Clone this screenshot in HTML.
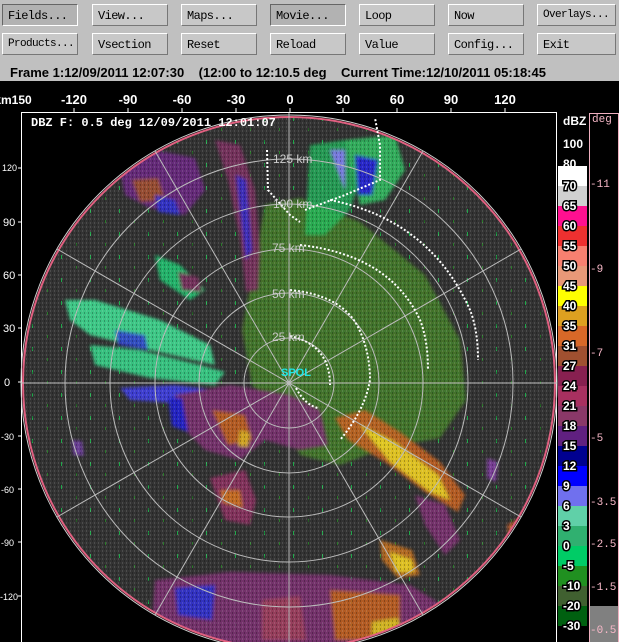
<!DOCTYPE html>
<html><head><meta charset="utf-8">
<style>
body{margin:0;width:619px;height:642px;overflow:hidden;background:#000;font-family:"Liberation Sans",sans-serif}
.top{position:absolute;left:0;top:0;width:619px;height:81px;background:#c0c0c0}
.b{position:absolute;height:22px;width:76px;background:#c8c8c8;border:1px solid;border-color:#fff #777 #777 #fff;box-sizing:border-box;font:12px "Liberation Mono",monospace;color:#000;padding:4px 0 0 5px;letter-spacing:-0.6px;white-space:nowrap;overflow:hidden}
.b.p{background:#b2b2b2;border-color:#666 #fff #fff #666}
.st{position:absolute;top:65px;left:10px;font:bold 13px "Liberation Sans",sans-serif;color:#000;white-space:pre}
</style></head><body>
<div class="top"></div>
<div class="b p" style="left:2px;top:4px">Fields...</div>
<div class="b" style="left:92px;top:4px">View...</div>
<div class="b" style="left:181px;top:4px">Maps...</div>
<div class="b p" style="left:270px;top:4px">Movie...</div>
<div class="b" style="left:359px;top:4px">Loop</div>
<div class="b" style="left:448px;top:4px">Now</div>
<div class="b" style="left:537px;top:4px;width:79px;font-size:11px">Overlays...</div>
<div class="b" style="left:2px;top:33px;font-size:11px">Products...</div>
<div class="b" style="left:92px;top:33px">Vsection</div>
<div class="b" style="left:181px;top:33px">Reset</div>
<div class="b" style="left:270px;top:33px">Reload</div>
<div class="b" style="left:359px;top:33px">Value</div>
<div class="b" style="left:448px;top:33px">Config...</div>
<div class="b" style="left:537px;top:33px;width:79px">Exit</div>
<div class="st">Frame 1:12/09/2011 12:07:30    (12:00 to 12:10.5 deg    Current Time:12/10/2011 05:18:45</div>
<svg style="position:absolute;left:0;top:81px" width="619" height="561" viewBox="0 81 619 561" xmlns="http://www.w3.org/2000/svg">
<defs>
<pattern id="sp" width="29" height="23" patternUnits="userSpaceOnUse">
<rect x="3" y="2" width="1" height="4" fill="#1fa84a"/><rect x="18" y="13" width="1" height="3" fill="#2a7a2a"/>
</pattern>
<pattern id="ol" width="6" height="6" patternUnits="userSpaceOnUse">
<rect width="6" height="6" fill="#43702a"/><rect x="1" y="0" width="1" height="3" fill="#2e9a3a"/><rect x="4" y="3" width="1" height="3" fill="#556626"/>
</pattern>
<pattern id="tx" width="4" height="4" patternUnits="userSpaceOnUse">
<rect width="4" height="4" fill="#000" opacity="0"/><rect x="0" y="0" width="1" height="2" fill="#000" opacity=".25"/><rect x="2" y="2" width="1" height="2" fill="#fff" opacity=".12"/>
</pattern>
<filter id="bl"><feGaussianBlur stdDeviation="1.5"/></filter>
<clipPath id="dc"><circle cx="289" cy="383" r="266"/></clipPath>
</defs>
<g font-family="Liberation Sans,sans-serif" font-weight="bold" font-size="13" fill="#fff" text-anchor="middle">
<text x="13" y="104" font-size="12">km150</text><text x="74" y="104">-120</text><text x="128" y="104">-90</text><text x="182" y="104">-60</text><text x="236" y="104">-30</text><text x="290" y="104">0</text><text x="343" y="104">30</text><text x="397" y="104">60</text><text x="451" y="104">90</text><text x="505" y="104">120</text>
</g>
<g stroke="#fff"><path d="M74 108v5M128 108v5M182 108v5M236 108v5M290 108v5M343 108v5M397 108v5M451 108v5M505 108v5M18 168h4M18 222h4M18 275h4M18 328h4M18 382h4M18 436h4M18 489h4M18 542h4M18 596h4"/></g>
<g font-family="Liberation Sans,sans-serif" font-size="9" fill="#fff">
<text x="2" y="171">120</text><text x="3" y="226" font-size="11">90</text><text x="3" y="279" font-size="11">60</text><text x="3" y="332" font-size="11">30</text><text x="4" y="386" font-size="11">0</text><text x="1" y="440">-30</text><text x="1" y="493">-60</text><text x="1" y="546">-90</text><text x="0" y="600">-120</text>
</g>
<rect x="21.5" y="112.5" width="535" height="540" fill="#000" stroke="#fff"/>
<g clip-path="url(#dc)">
<circle cx="289" cy="383" r="266" fill="#333"/>
<rect x="20" y="110" width="540" height="540" fill="url(#sp)"/>
<path d="M265 205 L300 198 L360 222 L425 275 L460 340 L466 400 L440 438 L385 448 L340 465 L300 455 L282 420 L252 385 L242 330 Z" fill="url(#ol)" filter="url(#bl)"/>
<g filter="url(#bl)" opacity=".9">
<path d="M310 145 L345 140 L365 165 L350 210 L325 235 L305 235 Z" fill="#20c060" opacity=".8"/>
<path d="M345 140 L395 135 L405 170 L385 200 L360 205 Z" fill="#30b860"/>
<path d="M355 155 L378 160 L372 195 L358 195 Z" fill="#2828d8"/>
<path d="M330 150 L345 150 L345 190 Z" fill="#8080f0"/>
<path d="M215 140 L240 145 L255 190 L260 250 L258 290 L246 292 L240 240 L228 180 Z" fill="#7a3060"/>
<path d="M236 175 L246 180 L252 250 L246 260 Z" fill="#3030e0" opacity=".8"/>
<path d="M120 170 L155 150 L195 158 L205 190 L185 215 L150 208 L125 195 Z" fill="#6a2a80"/>
<path d="M132 180 L158 178 L165 200 L140 202 Z" fill="#a05030"/>
<path d="M155 195 L175 200 L180 215 L158 212 Z" fill="#3030d0"/>
<path d="M155 255 L180 265 L205 290 L190 300 L160 280 Z" fill="#20c070"/>
<path d="M178 272 L198 277 L202 292 L182 290 Z" fill="#7a3060"/>
<path d="M65 300 L95 300 L160 320 L210 345 L215 365 L150 350 L90 335 L70 320 Z" fill="#40d890"/>
<path d="M90 345 L140 350 L200 365 L225 372 L215 385 L150 378 L95 365 Z" fill="#38d088"/>
<path d="M115 330 L145 335 L148 350 L118 345 Z" fill="#3030e0" opacity=".8"/>
<path d="M120 388 L175 385 L215 390 L205 405 L130 400 Z" fill="#4040e0"/>
<path d="M175 395 L230 385 L290 395 L320 410 L328 445 L300 450 L265 440 L240 460 L205 450 L185 430 Z" fill="#7a3070"/>
<path d="M168 398 L182 398 L188 432 L172 426 Z" fill="#2020d0"/>
<path d="M212 410 L245 415 L252 440 L228 445 Z" fill="#c06020"/>
<path d="M240 430 L250 433 L248 447 L238 446 Z" fill="#e0b020"/>
<path d="M210 478 L245 470 L256 500 L250 525 L225 520 Z" fill="#8a3060"/>
<path d="M220 490 L240 490 L243 508 L223 503 Z" fill="#d07020"/>
<path d="M335 418 L365 410 L400 432 L440 462 L465 495 L458 512 L425 492 L385 462 L348 440 Z" fill="#c06020"/>
<path d="M360 425 L395 442 L438 475 L450 500 L430 492 L390 462 Z" fill="#f0d020"/>
<path d="M415 495 L445 505 L460 540 L445 555 L425 525 Z" fill="#7a3070"/>
<path d="M155 580 L230 572 L330 575 L410 585 L450 610 L440 650 L150 650 Z" fill="#7a3070"/>
<path d="M175 588 L215 585 L212 620 L178 615 Z" fill="#3030d0"/>
<path d="M330 590 L400 595 L400 640 L335 640 Z" fill="#c06020"/>
<path d="M372 622 L398 618 L402 640 L372 642 Z" fill="#e0c020"/>
<path d="M262 600 L300 596 L306 640 L262 640 Z" fill="#a04060"/>
<path d="M380 540 L412 550 L420 575 L398 578 L382 560 Z" fill="#c07020"/>
<path d="M390 552 L412 560 L414 572 L396 572 Z" fill="#f0d020"/>
<path d="M487 458 L498 462 L496 482 L487 478 Z" fill="#8040a0"/>
<path d="M507 525 L520 518 L523 538 L510 546 Z" fill="#c06030"/>
<path d="M72 440 L82 441 L84 456 L73 455 Z" fill="#7040a0"/>
</g>
<rect x="20" y="110" width="540" height="540" fill="url(#tx)"/>
</g>
<circle cx="289" cy="383" r="266" fill="none" stroke="#e06080" stroke-width="2"/>
<circle cx="289" cy="383" r="268" fill="none" stroke="#ccc"/>
<g fill="none" stroke="#bbb" stroke-width="1">
<circle cx="289" cy="383" r="45"/><circle cx="289" cy="383" r="90"/><circle cx="289" cy="383" r="134"/><circle cx="289" cy="383" r="179"/><circle cx="289" cy="383" r="224"/>
<path d="M21 383H557M289 113V642M155 151L423 615M155 615L423 151M57 249L521 517M57 517L521 249"/>
</g>
<g fill="none" stroke="#fff" stroke-width="2" stroke-dasharray="2 2">
<path d="M290 336 Q330 345 330 385 M296 388 Q305 405 318 408"/>
<path d="M290 290 Q340 295 357 325 Q370 350 370 380 Q365 410 340 440"/>
<path d="M300 245 Q390 255 420 320 Q428 340 428 370"/>
<path d="M330 200 Q430 220 470 310 Q478 330 478 360"/>
<path d="M267 150 L268 190 L290 215 L300 222 M305 210 L345 195 L380 180 L380 145 L375 118"/>
</g>
<g font-family="Liberation Sans,sans-serif" font-size="12" fill="#ccc">
<text x="273" y="163">125 km</text><text x="273" y="208">100 km</text><text x="272" y="252">75 km</text><text x="272" y="298">50 km</text><text x="272" y="341">25 km</text>
</g>
<text x="281" y="376" font-family="Liberation Sans,sans-serif" font-weight="bold" font-size="11" fill="#20e8e8">SPOL</text>
<text x="31" y="126" font-family="Liberation Mono,monospace" font-weight="bold" font-size="12" fill="#fff">DBZ F: 0.5 deg 12/09/2011 12:01:07</text>
<g>
<rect x="558" y="166" width="29" height="20" fill="#fff"/><rect x="558" y="186" width="29" height="20" fill="#d0d0d0"/>
<rect x="558" y="206" width="29" height="20" fill="#ff1090"/><rect x="558" y="226" width="29" height="20" fill="#ee3030"/>
<rect x="558" y="246" width="29" height="20" fill="#f88070"/><rect x="558" y="266" width="29" height="20" fill="#e89878"/>
<rect x="558" y="286" width="29" height="20" fill="#ffff00"/><rect x="558" y="306" width="29" height="20" fill="#dda020"/>
<rect x="558" y="326" width="29" height="20" fill="#d86828"/><rect x="558" y="346" width="29" height="20" fill="#a05030"/>
<rect x="558" y="366" width="29" height="20" fill="#882050"/><rect x="558" y="386" width="29" height="20" fill="#a83060"/>
<rect x="558" y="406" width="29" height="20" fill="#8a3868"/><rect x="558" y="426" width="29" height="20" fill="#602080"/>
<rect x="558" y="446" width="29" height="20" fill="#000090"/><rect x="558" y="466" width="29" height="20" fill="#0000ff"/>
<rect x="558" y="486" width="29" height="20" fill="#7070ee"/><rect x="558" y="506" width="29" height="20" fill="#60d0a8"/>
<rect x="558" y="526" width="29" height="20" fill="#30b070"/><rect x="558" y="546" width="29" height="20" fill="#00cc66"/>
<rect x="558" y="566" width="29" height="20" fill="#209020"/><rect x="558" y="586" width="29" height="20" fill="#406030"/>
<rect x="558" y="606" width="29" height="20" fill="#006010"/>
</g>
<g font-family="Liberation Sans,sans-serif" font-weight="bold" font-size="12" fill="#fff">
<text x="563" y="125">dBZ</text><text x="563" y="148">100</text><text x="563" y="168">80</text>
<g style="paint-order:stroke" stroke="#000" stroke-width="3">
<text x="563" y="190">70</text><text x="563" y="210">65</text><text x="563" y="230">60</text><text x="563" y="250">55</text><text x="563" y="270">50</text><text x="563" y="290">45</text><text x="563" y="310">40</text><text x="563" y="330">35</text><text x="563" y="350">31</text><text x="563" y="370">27</text><text x="563" y="390">24</text><text x="563" y="410">21</text><text x="563" y="430">18</text><text x="563" y="450">15</text><text x="563" y="470">12</text><text x="563" y="490">9</text><text x="563" y="510">6</text><text x="563" y="530">3</text><text x="563" y="550">0</text><text x="563" y="570">-5</text><text x="563" y="590">-10</text><text x="563" y="610">-20</text><text x="563" y="630">-30</text>
</g></g>
<rect x="589.5" y="113.5" width="29" height="530" fill="#000" stroke="#f0b0c0"/>
<rect x="590" y="606" width="28" height="36" fill="#808080"/>
<g font-family="Liberation Mono,monospace" font-size="11" fill="#f8b8c8">
<text x="592" y="122">deg</text><text x="590" y="187">-11</text><text x="590" y="272">-9</text><text x="590" y="356">-7</text><text x="590" y="441">-5</text><text x="590" y="505">-3.5</text><text x="590" y="547">-2.5</text><text x="590" y="590">-1.5</text><text x="590" y="633">-0.5</text>
</g>
</svg>
</body></html>
